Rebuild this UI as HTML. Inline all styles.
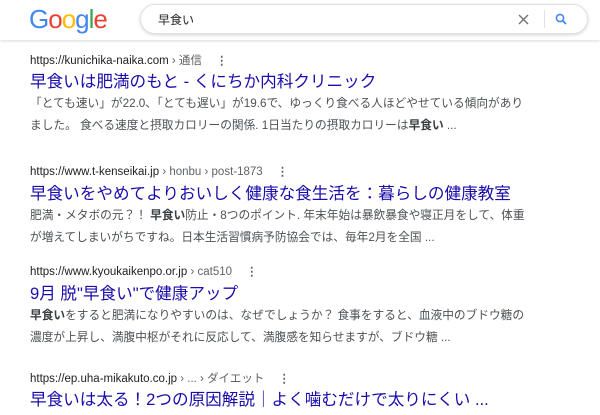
<!DOCTYPE html>
<html><head><meta charset="utf-8"><style>
body{margin:0;width:600px;height:415px;overflow:hidden;background:#fff;font-family:"Liberation Sans","Noto Sans CJK JP",sans-serif;}
.hdr{position:absolute;left:0;top:0;width:600px;height:40px;background:#fff;box-shadow:0 1px 3px rgba(0,0,0,.15);}
.logo{position:absolute;left:29px;top:4px;font-size:26px;letter-spacing:-1px;font-family:"Liberation Sans",sans-serif;}
.box{position:absolute;left:140px;top:4px;width:446px;height:28px;border:1px solid #dfe1e5;border-radius:15px;box-shadow:0 1px 3px rgba(32,33,36,.2);}
.q{position:absolute;left:17px;top:6px;font-size:12px;color:#202124;}
.r{position:absolute;left:30px;}
.u{font-size:11.5px;color:#202124;height:16px;white-space:nowrap}
.u span{color:#5f6368}
.t{font-size:16.6px;color:#1a0dab;white-space:nowrap;line-height:22px;margin-top:3px}
.s{font-size:11.7px;color:#4d5156;line-height:22px;white-space:nowrap}
b{color:#3c4043}
.dots{display:inline-block;margin-left:14px;color:#5f6368;font-weight:bold}
</style></head><body>
<div class="hdr">
<div class="logo"><span style="color:#4285f4">G</span><span style="color:#ea4335">o</span><span style="color:#fbbc05">o</span><span style="color:#4285f4">g</span><span style="color:#34a853">l</span><span style="color:#ea4335">e</span></div>
<div class="box"><div class="q">早食い</div>
<svg style="position:absolute;left:377px;top:9px" width="11" height="11" viewBox="0 0 11 11"><path d="M1 1L10 10M10 1L1 10" stroke="#70757a" stroke-width="1.4"/></svg>
<div style="position:absolute;left:403px;top:5px;width:1px;height:18px;background:#dfe1e5"></div>
<svg style="position:absolute;left:414px;top:8px" width="12" height="12" viewBox="0 0 12 12"><circle cx="5" cy="5" r="3.6" stroke="#4285f4" stroke-width="1.6" fill="none"/><path d="M7.6 7.6L11 11" stroke="#4285f4" stroke-width="1.8"/></svg>
</div></div>

<div class="r" style="top:52px">
<div class="u">https://kunichika-naika.com <span>› 通信</span><span class="dots">⋮</span></div>
<div class="t">早食いは肥満のもと - くにちか内科クリニック</div>
<div class="s">「とても速い」が22.0、「とても遅い」が19.6で、ゆっくり食べる人ほどやせている傾向があり<br>ました。 食べる速度と摂取カロリーの関係. 1日当たりの摂取カロリーは<b>早食い</b> ...</div>
</div>

<div class="r" style="top:164px">
<div class="u">https://www.t-kenseikai.jp <span>› honbu › post-1873</span><span class="dots">⋮</span></div>
<div class="t">早食いをやめてよりおいしく健康な食生活を：暮らしの健康教室</div>
<div class="s">肥満・メタボの元？！ <b>早食い</b>防止・8つのポイント. 年末年始は暴飲暴食や寝正月をして、体重<br>が増えてしまいがちですね。日本生活習慣病予防協会では、毎年2月を全国 ...</div>
</div>

<div class="r" style="top:264px">
<div class="u">https://www.kyoukaikenpo.or.jp <span>› cat510</span><span class="dots">⋮</span></div>
<div class="t">9月 脱"早食い"で健康アップ</div>
<div class="s"><b>早食い</b>をすると肥満になりやすいのは、なぜでしょうか？ 食事をすると、血液中のブドウ糖の<br>濃度が上昇し、満腹中枢がそれに反応して、満腹感を知らせますが、ブドウ糖 ...</div>
</div>

<div class="r" style="top:370px">
<div class="u">https://ep.uha-mikakuto.co.jp <span>› ... › ダイエット</span><span class="dots">⋮</span></div>
<div class="t">早食いは太る！2つの原因解説｜よく噛むだけで太りにくい ...</div>
</div>
</body></html>
